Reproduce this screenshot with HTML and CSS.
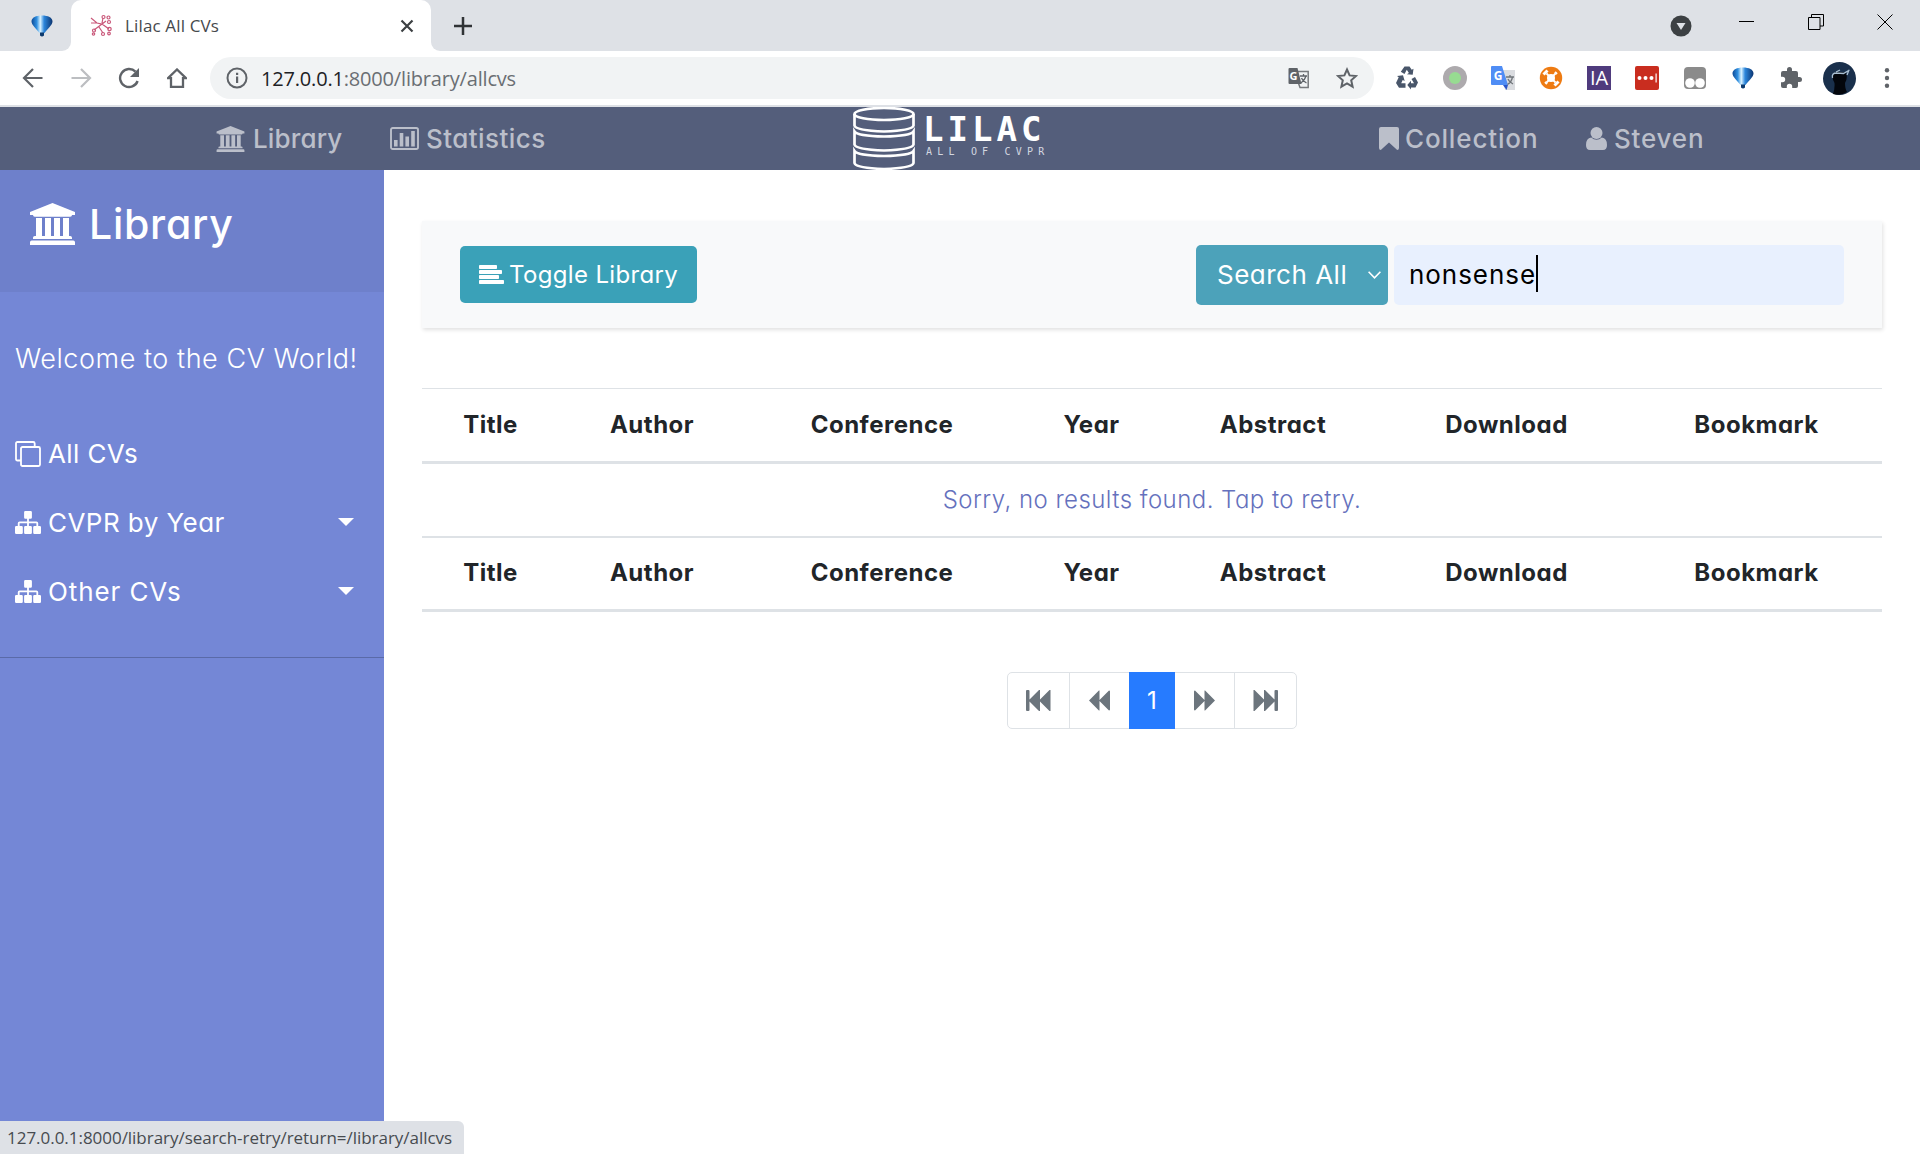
FILE: index.html
```html
<!DOCTYPE html>
<html lang="en">
<head>
<meta charset="utf-8">
<title>Lilac All CVs</title>
<link rel="stylesheet" href="styles.css">
</head>
<body>
<svg class="defs" width="0" height="0">
  <defs>
    <linearGradient id="balloonFill" x1="0" x2="1" y1="0" y2="0">
      <stop offset="0" stop-color="#0d4a96"/><stop offset=".25" stop-color="#2f8fe0"/><stop offset=".42" stop-color="#d9f2ff"/><stop offset=".6" stop-color="#2b86dc"/><stop offset="1" stop-color="#0b3470"/>
    </linearGradient>
    <symbol id="balloon" viewBox="0 0 22 22"><path fill="url(#balloonFill)" d="M.5 6.500C.5 2.500 5 .5 11 .5s10.500 2 10.500 6c0 3.500-5 7.500-8 11.500h-5C5.500 14 .5 10 .5 6.500z"/><path fill="#0d3a6e" d="M9 17.500h4v3q-2 2-4 0z"/></symbol>
    <symbol id="university" viewBox="0 0 45 42"><path fill="currentColor" d="M22.500 0 45 9v3h-3q0 1.700-1.800 1.700H4.800Q3 13.700 3 12H0V9zM6 15h6v18h3V15h6v18h3V15h6v18h3V15h6v18h1.200Q42 33 42 34.700V36H3v-1.300Q3 33 4.800 33H6zM1.800 37.500h41.400q1.800 0 1.800 1.800V42H0v-2.700q0-1.800 1.800-1.800z"/></symbol>
    <symbol id="sitemap" viewBox="0 0 26 23"><path fill="currentColor" d="M10.300 0h5.400q1.200 0 1.200 1.200v5.400q0 1.200-1.200 1.200h-1.800v2.600h7.500q1.800 0 1.800 1.800v2.900h1.600q1.200 0 1.200 1.200v5.500q0 1.200-1.200 1.200h-5.400q-1.200 0-1.200-1.200v-5.500q0-1.200 1.200-1.200h2v-2.900h-7.500v2.900h1.800q1.200 0 1.200 1.200v5.500q0 1.200-1.200 1.200h-5.400q-1.200 0-1.200-1.200v-5.500q0-1.200 1.200-1.200h1.800v-2.900H4.600v2.900h2q1.200 0 1.200 1.200v5.500q0 1.200-1.200 1.200H1.200Q0 23 0 21.800v-5.500q0-1.200 1.200-1.200h1.600v-2.900q0-1.800 1.800-1.800h7.500V7.800h-1.800q-1.200 0-1.200-1.200V1.200Q9.100 0 10.300 0z"/></symbol>
    <symbol id="backward" viewBox="0 0 21 20"><path fill="currentColor" d="M10.500 0v9.400L20 0q1 0 1 1v18q0 1-1 1l-9.500-9.400V20h-.6L0 10 9.900 0z"/></symbol>
  </defs>
</svg>

<header class="browser">
  <div class="tabstrip">
    <div class="pinned"><svg width="22" height="22"><use href="#balloon"/></svg></div>
    <div class="tab">
      <svg class="tab-icon" width="22" height="23" viewBox="0 0 22 23" fill="none" stroke="#c9587a" stroke-width="1.200"><path d="M1 4l6 5 5 1 4-3M7 9H1M12 10L4 16M12 10l7 5M9 13l4 6M12 9l1-5"/><circle cx="13.500" cy="3" r="1.500"/><circle cx="18.500" cy="3.500" r="1.500"/><circle cx="19" cy="8" r="1.500"/><circle cx="19.500" cy="15" r="1.700"/><circle cx="13" cy="20" r="1.500"/><circle cx="4" cy="16.500" r="1.500"/><circle cx="3.500" cy="20" r="1.200"/><circle cx="19" cy="19.500" r="1.300"/></svg>
      <span class="tab-title">Lilac All CVs</span>
      <svg class="tab-close" width="14" height="14" viewBox="0 0 14 14" stroke="#3c4043" stroke-width="2.200"><path d="M1.500 1.500l11 11M12.500 1.500l-11 11"/></svg>
    </div>
    <div class="strip-rest">
      <svg class="new-tab" width="18" height="18" viewBox="0 0 18 18" stroke="#303336" stroke-width="2.500"><path d="M9 0v18M0 9h18"/></svg>
      <div class="window-controls">
        <svg class="tab-search" width="22" height="22" viewBox="0 0 22 22"><circle cx="11" cy="11" r="10.500" fill="#3c4043"/><path fill="#dee1e6" d="M6.500 8h9L11 15z"/></svg>
        <svg width="16" height="16" viewBox="0 0 16 16" stroke="#000"><path d="M0 7.500h15"/></svg>
        <svg width="16" height="16" viewBox="0 0 16 16" stroke="#000" fill="none"><path d="M.5 3.500h11.500v12H.5zM3.500 3.500V.5h12v11.500H12"/></svg>
        <svg width="16" height="16" viewBox="0 0 16 16" stroke="#000"><path d="M.5.5l15 15M15.500.5l-15 15"/></svg>
      </div>
    </div>
  </div>
  <div class="toolbar">
    <div class="nav-buttons">
      <svg width="22" height="20" viewBox="0 0 22 20" fill="none" stroke="#5f6368" stroke-width="2.200"><path d="M20.500 10H2M11 1l-9 9 9 9"/></svg>
      <svg width="22" height="20" viewBox="0 0 22 20" fill="none" stroke="#bcbec1" stroke-width="2.200"><path d="M1.500 10H20M11 1l9 9-9 9"/></svg>
      <svg width="22" height="22" viewBox="0 0 22 22"><path fill="none" stroke="#5f6368" stroke-width="2.400" d="M19.600 14A9 9 0 1 1 17.500 4.700"/><path fill="#5f6368" d="M21 1v9h-9z"/></svg>
      <svg width="20" height="20" viewBox="0 0 20 20"><path fill="none" stroke="#5f6368" stroke-width="2.300" d="M1 10.200h3V19h12v-8.800h3L10 1.500z"/></svg>
    </div>
    <div class="address">
      <svg class="info" width="22" height="22" viewBox="0 0 22 22"><circle cx="11" cy="11" r="9.500" fill="none" stroke="#5f6368" stroke-width="2"/><path fill="#5f6368" d="M10 9.500h2.200V16H10zM10 5.800h2.200V8H10z"/></svg>
      <span class="url"><b class="host">127.0.0.1</b>:8000/library/allcvs</span>
      <div class="address-actions">
        <svg width="22" height="22" viewBox="0 0 22 22"><path fill="none" stroke="#777a7d" stroke-width="1.500" d="M9 4.500h11.200v16H12L9 12z"/><path d="M1.500 1h8l4 16h-12Q.5 17 .5 16V2q0-1 1-1z" fill="#5f6368"/><text x="1.500" y="12.500" class="g-small">G</text><path d="M12 9h7M15.500 7v2M18 9q-1 4-5 7M13.500 11q1 3 5 5" fill="none" stroke="#5f6368" stroke-width="1.300"/></svg>
        <svg width="22" height="22" viewBox="0 0 22 22"><path fill="none" stroke="#5f6368" stroke-width="2" d="M11 2.500l2.600 5.900 6.400.6-4.800 4.300 1.400 6.300L11 16.300l-5.600 3.300 1.400-6.300L2 9l6.400-.6z"/></svg>
      </div>
    </div>
    <div class="extensions">
      <svg width="24" height="24" viewBox="0 0 24 24" fill="#49566a"><path d="M9.500.5h5l2.200 3.300 1.800-1-.8 6-5.800-.6 2-1.200-2.100-3.300L9.500 8 5.800 5.800z"/><path d="M20 11l3 5.500-2.500 5H16v2L12.300 19l3.700-4.200v2.400h3L16.500 13z"/><path d="M2 10l6-.8L9.700 15l-2-.9-1.500 3.200H10.500v4.500H4L1 17l2.700-5.800z"/></svg>
      <svg width="24" height="24" viewBox="0 0 24 24"><circle cx="12" cy="12" r="12" fill="#adaaad"/><circle cx="12" cy="12" r="6" fill="#97dc91"/></svg>
      <svg width="24" height="24" viewBox="0 0 24 24"><path fill="#dadce0" d="M11 4h13v20H14z"/><path fill="#2b56c8" d="M12 19h5l-1.500 5z"/><path fill="#4f8df5" d="M1 0h10l6 19H1q-1 0-1-1V1q0-1 1-1z"/><text x="2.800" y="14" class="g-large">G</text><path d="M15 11h8M19 9v2M21.500 11q-1 5-5 7.500M17 13q1 3 5 5" fill="none" stroke="#70757a" stroke-width="1.300"/></svg>
      <svg width="24" height="24" viewBox="0 0 24 24"><circle cx="12" cy="12" r="11.200" fill="#ee7b12"/><circle cx="12" cy="12" r="4" fill="#fff"/><path d="M7.500 7.500l9 9M16.500 7.500l-9 9" stroke="#fff" stroke-width="1.800"/><path d="M4.500 8.500l4-4M15.500 19.500l4-4" stroke="#fff" stroke-width="3"/><path d="M16 6l2 2M6 16l2 2" stroke="#fff" stroke-width="2"/></svg>
      <svg width="24" height="24" viewBox="0 0 24 24"><path fill="#4f3b7d" d="M0 0h24v24H0z"/><text x="12" y="19" class="ia">IA</text></svg>
      <svg width="24" height="24" viewBox="0 0 24 24"><rect width="24" height="24" rx="2" fill="#c92d1f"/><g fill="#fff"><circle cx="4.500" cy="12" r="2"/><circle cx="10.500" cy="12" r="2"/><circle cx="16.500" cy="12" r="2"/><path d="M20.500 7.500h1.200v9h-1.200z"/></g></svg>
      <svg width="22" height="22" viewBox="0 0 22 22"><rect width="22" height="22" rx="4" fill="#8b8b8b"/><circle cx="6" cy="16" r="4.800" fill="#fff"/><circle cx="16" cy="16" r="4.800" fill="#fff"/></svg>
      <svg width="22" height="22"><use href="#balloon"/></svg>
      <svg width="24" height="24" viewBox="0 0 24 24" fill="#5f6368"><path d="M20.500 11H19V7q0-2-2-2h-4V3.500a2.500 2.500 0 0 0-5 0V5H4Q2 5 2 7v3.800h1.500a2.700 2.700 0 0 1 0 5.400H2V20q0 2 2 2h3.800v-1.500a2.700 2.700 0 0 1 5.400 0V22H17q2 0 2-2v-4h1.500a2.500 2.500 0 0 0 0-5z"/></svg>
      <svg width="33" height="33" viewBox="0 0 33 33"><circle cx="16.500" cy="16.500" r="16.500" fill="#1a304c"/><path fill="#03060c" d="M10 32q2-5 1.500-11Q8 15 11 11q6-2 12 0 2 5-1 10 0 6 2 9-6 4-14 2z"/><path d="M9.500 16q-1-5 4-5l7 .5 6-3.500M13 10l4-2M26 8l-2 5" fill="none" stroke="#a9bfd2" stroke-width="1.300"/></svg>
      <svg width="6" height="20" viewBox="0 0 6 20" fill="#5f6368"><circle cx="3" cy="2.200" r="2.200"/><circle cx="3" cy="10" r="2.200"/><circle cx="3" cy="17.800" r="2.200"/></svg>
    </div>
  </div>
</header>

<nav class="navbar">
  <a class="nav-link nav-library"><svg width="29" height="26"><use href="#university"/></svg><span>Library</span></a>
  <a class="nav-link nav-stats"><svg width="29" height="23" viewBox="0 0 29 23"><rect x="1" y="1" width="27" height="21" rx="1.800" fill="none" stroke="currentColor" stroke-width="1.900"/><path fill="currentColor" d="M4 13h3.600v6.500H4zM9.700 6h3.600v13.500H9.700zM15.400 9.500H19v10h-3.600zM21.200 4h3.600v15.500h-3.600z"/></svg><span>Statistics</span></a>
  <a class="brand">
    <svg width="62" height="63" viewBox="0 0 62 63" fill="none" stroke="#fff" stroke-width="2.700"><ellipse cx="31" cy="7" rx="29.500" ry="6"/><path d="M1.500 7v11.500q1 5 29.500 6 28.500-1 29.500-6V7M1.500 24.500v13q1 5 29.500 6 28.500-1 29.500-6v-13q-3 4.500-29.500 5-26.500-.5-29.500-5zM1.500 44v12q1 5 29.500 6 28.500-1 29.500-6V44q-3 4.500-29.500 5-26.500-.5-29.500-5z"/></svg>
    <span class="brand-text"><span class="brand-name">LILAC</span><span class="brand-tag">ALL OF CVPR</span></span>
  </a>
  <a class="nav-link nav-collection"><svg width="20" height="23" viewBox="0 0 20 23"><path fill="currentColor" d="M2 0h16q2 0 2 2v19q0 2-1.800 2L10 15.500 1.800 23Q0 23 0 21V2q0-2 2-2z"/></svg><span>Collection</span></a>
  <a class="nav-link nav-user"><svg width="21" height="23" viewBox="0 0 21 23"><circle cx="10.500" cy="6" r="6" fill="currentColor"/><path fill="currentColor" d="M5.200 10.500q5.300 4.500 10.600 0Q21 11 21 18q0 5-4 5H4q-4 0-4-5 0-7 5.200-7.500z"/></svg><span>Steven</span></a>
</nav>

<div class="page">
  <aside class="sidebar">
    <div class="sidebar-header"><svg width="45" height="42"><use href="#university"/></svg><span>Library</span></div>
    <div class="sidebar-body">
      <p class="welcome">Welcome to the CV World!</p>
      <a class="side-link"><svg width="26" height="26" viewBox="0 0 26 26" fill="none" stroke="#fff" stroke-width="1.800"><rect x="6" y="6" width="19" height="19" rx="1.500"/><path d="M6 19.500H2.500q-1.500 0-1.500-1.500V2.500Q1 1 2.500 1h15.700q1.500 0 1.500 1.500V6"/></svg><span class="label-all">All CVs</span></a>
      <a class="side-link"><svg width="26" height="23"><use href="#sitemap"/></svg><span class="label-cvpr">CVPR by Year</span><i class="caret"></i></a>
      <a class="side-link"><svg width="26" height="23"><use href="#sitemap"/></svg><span class="label-other">Other CVs</span><i class="caret"></i></a>
    </div>
  </aside>
  <main class="content">
    <section class="controls">
      <button class="toggle"><svg width="25" height="19" viewBox="0 0 25 19" fill="#fff"><rect width="18" height="4" rx=".8"/><rect y="5" width="23" height="4" rx=".8"/><rect y="10" width="20" height="4" rx=".8"/><rect y="15" width="25" height="4" rx=".8"/></svg><span>Toggle Library</span></button>
      <div class="search">
        <div class="select"><span>Search All</span><svg width="13" height="8" viewBox="0 0 13 8" fill="none" stroke="#fff" stroke-width="1.600"><path d="M.6.8l5.900 6 5.900-6"/></svg></div>
        <div class="field"><span>nonsense</span><i class="cursor"></i></div>
      </div>
    </section>
    <table class="results">
      <colgroup><col class="c1"><col class="c2"><col class="c3"><col class="c4"><col class="c5"><col class="c6"><col class="c7"></colgroup>
      <thead><tr><th>Title</th><th>Author</th><th>Conference</th><th>Year</th><th>Abstract</th><th>Download</th><th>Bookmark</th></tr></thead>
      <tbody><tr><td colspan="7">Sorry, no results found. Tap to retry.</td></tr></tbody>
      <tfoot><tr><th>Title</th><th>Author</th><th>Conference</th><th>Year</th><th>Abstract</th><th>Download</th><th>Bookmark</th></tr></tfoot>
    </table>
    <div class="pagination">
      <a class="page-item edge"><svg width="25" height="21" viewBox="0 0 25 21" fill="#6c757d"><path d="M0 1q0-1 1-1h1.500q1 0 1 1v8.500L13 0h1v9.500L23.500 0h1v21h-1L14 11.500V21h-1l-9.500-9.500V20q0 1-1 1H1q-1 0-1-1z"/></svg></a>
      <a class="page-item"><svg width="21" height="21"><use href="#backward"/></svg></a>
      <a class="page-item current">1</a>
      <a class="page-item"><svg class="flip" width="21" height="21"><use href="#backward"/></svg></a>
      <a class="page-item edge"><svg class="flip" width="25" height="21" viewBox="0 0 25 21" fill="#6c757d"><path d="M0 1q0-1 1-1h1.500q1 0 1 1v8.500L13 0h1v9.500L23.500 0h1v21h-1L14 11.500V21h-1l-9.500-9.500V20q0 1-1 1H1q-1 0-1-1z"/></svg></a>
    </div>
  </main>
</div>
<div class="status">127.0.0.1:8000/library/search-retry/return=/library/allcvs</div>
</body>
</html>
```
FILE: styles.css
```css
* { box-sizing: border-box; }
body {
  margin: 0;
  height: 1154px;
  overflow: hidden;
  display: flex;
  flex-direction: column;
  background: #fff;
  color: #212529;
  font-family: Inter, "Open Sans", sans-serif;
  font-feature-settings: "cv11";
}
svg { display: block; flex: none; }
.defs { position: absolute; }

/* Browser chrome */
.browser { flex: none; font-family: "Open Sans", "Noto Sans", sans-serif; font-feature-settings: normal; }
.tabstrip { display: flex; align-items: center; height: 51px; background: linear-gradient(#dee1e6 25px, #fff 25px); }
.pinned { display: flex; justify-content: flex-end; align-items: center; width: 71px; height: 51px; padding-right: 18px; border-bottom-right-radius: 9px; background: #dee1e6; }
.tab { display: flex; align-items: center; width: 360px; height: 51px; padding: 0 17px 0 19px; border-radius: 10px 10px 0 0; background: #fff; }
.tab-title { margin-left: 13px; font-size: 17px; color: #45494d; letter-spacing: 0.15px; white-space: nowrap; }
.tab-close { margin-left: auto; }
.strip-rest { display: flex; flex: 1; align-items: center; height: 51px; border-bottom-left-radius: 9px; background: #dee1e6; }
.new-tab { margin-left: 23px; }
.window-controls { display: flex; align-items: center; gap: 53px; margin-left: auto; padding: 0 27px 8px 0; }
.tab-search { margin: 8px -6px 0 0; }

.toolbar { display: flex; align-items: center; height: 56px; padding: 0 9px; border-bottom: 2px solid #dee1e6; background: #fff; }
.nav-buttons { display: grid; grid-template-columns: repeat(4, 48px); align-items: center; justify-items: center; }
.extensions { display: grid; grid-template-columns: repeat(11, 48px); align-items: center; justify-items: center; margin-left: 9px; }
.address { display: flex; align-items: center; flex: 1; height: 42px; margin-left: 9px; padding: 0 3px 0 16px; border-radius: 21px; background: #f1f3f4; }
.address-actions { display: grid; grid-template-columns: 48px 48px; align-items: center; justify-items: center; margin-left: auto; }
.url { margin-left: 13px; font-size: 20px; letter-spacing: -0.18px; color: #6a6e73; white-space: nowrap; }
.host { font-weight: 400; color: #202124; }
.g-small { font: bold 11px "Open Sans", sans-serif; fill: #fff; }
.g-large { font: bold 12px "Open Sans", sans-serif; fill: #fff; }
.ia { font: 20px "Open Sans", sans-serif; fill: #fff; text-anchor: middle; }

/* Site navigation */
.navbar { display: grid; grid-template-columns: 174px 463px 526px 207px 134px; flex: none; align-items: center; height: 63px; padding-left: 216px; background: #545e7b; }
.nav-link { display: flex; align-items: center; color: #bbbfca; font-size: 26px; font-weight: 500; line-height: 40px; white-space: nowrap; }
.nav-link span { margin-left: 7px; }
.nav-library span { margin-left: 8px; letter-spacing: 0.15px; }
.nav-stats span { letter-spacing: 0.45px; }
.nav-collection span { margin-left: 6px; letter-spacing: 0.85px; }
.nav-user span { letter-spacing: 0.8px; }
.brand { display: flex; }
.brand-text { display: flex; flex-direction: column; padding: 4px 0 0 8px; color: #fff; white-space: nowrap; }
.brand-name { font: 700 34px/36px "DejaVu Sans Mono", monospace; letter-spacing: 4px; }
.brand-tag { padding-left: 3px; font: 10px/9px "DejaVu Sans Mono", monospace; color: #d3d7e0; letter-spacing: 5.2px; }

/* Sidebar */
.page { display: flex; flex: 1; min-height: 0; }
.sidebar { width: 384px; flex: none; background: #7487d6; color: #fff; }
.sidebar-header { display: flex; align-items: center; height: 122px; padding: 0 0 14px 30px; background: #6e80cb; font-size: 41px; font-weight: 500; }
.sidebar-header span { margin-left: 14px; letter-spacing: 0.75px; }
.sidebar-body { height: 366px; padding: 32px 0 0 15px; border-bottom: 1px solid #5a6aa8; font-size: 26px; }
.welcome { margin: 0 0 26px; font-size: 27px; line-height: 69px; font-weight: 300; letter-spacing: 0.55px; white-space: nowrap; }
.side-link { display: flex; align-items: center; height: 69px; white-space: nowrap; }
.side-link span { margin-left: 7px; }
.label-all { letter-spacing: 0.4px; }
.label-cvpr { letter-spacing: 0.45px; }
.label-other { letter-spacing: 0.9px; }
.caret { margin: 0 30px 2px auto; border: 8px solid transparent; border-top-color: #fff; border-bottom: 0; }

/* Main content */
.content { flex: 1; padding: 51px 38px 0; }
.controls { display: flex; justify-content: space-between; align-items: center; height: 107px; padding: 0 38px; background: #f8f9fa; box-shadow: 1px 2px 4px rgba(0,0,0,.12); }
.toggle { display: flex; align-items: center; width: 237px; height: 57px; padding: 0 0 0 19px; border: 0; border-radius: 5px; background: #3aa1b8; color: #fff; font: 24px Inter, sans-serif; font-feature-settings: "cv11"; letter-spacing: 0.35px; white-space: nowrap; }
.toggle span { margin-left: 5px; }
.search { display: flex; gap: 6px; font-size: 26px; white-space: nowrap; }
.select { display: flex; align-items: center; justify-content: space-between; width: 192px; height: 60px; padding: 0 7px 0 21px; border-radius: 5px; background: #4ca2ba; color: #fff; letter-spacing: 0.5px; }
.field { display: flex; align-items: center; width: 450px; height: 60px; padding-left: 15px; border-radius: 5px; background: #e8f0fe; color: #000; letter-spacing: 0.95px; }
.cursor { width: 2px; height: 37px; margin-top: -3px; background: #000; }

.results { width: 1460px; margin-top: 60px; border-collapse: separate; border-spacing: 0; table-layout: fixed; font-size: 24px; text-align: center; }
.results th, .results td { padding: 0 0 2px; white-space: nowrap; }
.results thead th { height: 76px; border-top: 1px solid #dee2e6; border-bottom: 3px solid #dee2e6; }
.results td { height: 72px; color: #6571bd; font-weight: 300; letter-spacing: 0.45px; }
.results tfoot th { height: 76px; border-top: 2px solid #dee2e6; border-bottom: 3px solid #dee2e6; }
.results th { font-weight: 700; letter-spacing: 0.5px; }
.c1 { width: 137px; } .c2 { width: 186px; } .c3 { width: 274px; } .c4 { width: 145px; }
.c5 { width: 218px; } .c6 { width: 249px; } .c7 { width: 251px; }

.pagination { display: flex; width: 290px; height: 57px; margin: 60px auto 0; border: 1px solid #dee2e6; border-radius: 5px; color: #6c757d; }
.page-item { display: flex; justify-content: center; align-items: center; width: 60px; font-size: 24px; }
.edge { width: 62px; }
.edge:first-child { border-right: 1px solid #dee2e6; }
.edge:last-child { border-left: 1px solid #dee2e6; }
.current { width: 46px; margin: -1px 0; background: #267bff; color: #fff; }
.flip { transform: scaleX(-1); }

/* Link preview over the bottom corner of the page */
.status { position: absolute; left: 0; bottom: 0; width: 464px; height: 33px; padding-left: 7px; border-radius: 0 6px 0 0; background: #dee1e6; color: #474b50; font: 17px/33px "Open Sans", sans-serif; letter-spacing: -0.03px; white-space: nowrap; }
```
